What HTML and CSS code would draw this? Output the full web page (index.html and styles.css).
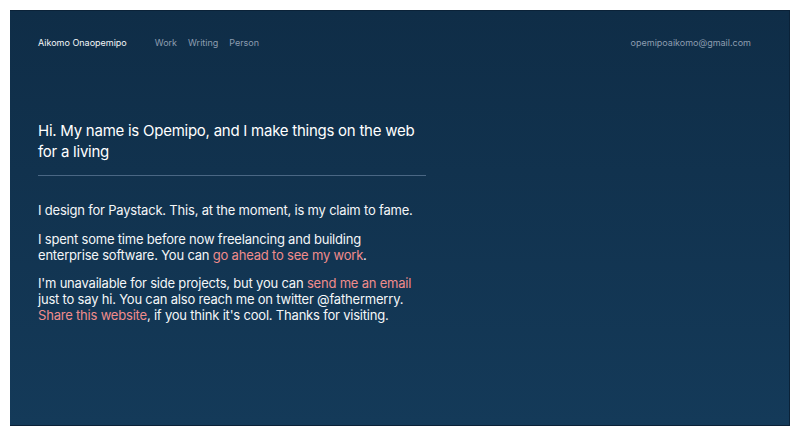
FILE: index.html
```html
<!DOCTYPE html>
<html lang="en">
<head>
  <meta charset="UTF-8" />
  <meta name="viewport" content="width=device-width, initial-scale=1" />
  <title>Aikomo Onaopemipo</title>
  <link rel="stylesheet" href="styles.css">
</head>
<body>
  <div class="frame">
    <!-- Top bar -->
    <header class="topbar">
      <div class="left">
        <a class="brand" href="/">Aikomo Onaopemipo</a>
        <nav>
          <a href="/work">Work</a>
          <a href="/writing">Writing</a>
          <a href="/person">Person</a>
        </nav>
      </div>
      <a class="email" href="mailto:opemipoaikomo@gmail.com">opemipoaikomo@gmail.com</a>
    </header>

    <!-- Intro -->
    <main class="intro">
      <h1>Hi. My name is Opemipo, and I make things on the web for a living</h1>
      <hr>
      <p>I design for Paystack. This, at the moment, is my claim to fame.</p>
      <p>I spent some time before now freelancing and building enterprise software. You can <a href="/work">go ahead to see my work</a>.</p>
      <p>I'm unavailable for side projects, but you can <a href="mailto:opemipoaikomo@gmail.com">send me an email</a> just to say hi. You can also reach me on twitter @fathermerry. <a href="#">Share this website</a>, if you think it's cool. Thanks for visiting.</p>
    </main>
  </div>
</body>
</html>
```

FILE: styles.css
```css
/* Reset */
* {
  margin: 0;
  padding: 0;
  box-sizing: border-box;
}
html, body {
  background-color: #fff;
}
body {
  padding: 10px 10px 12px;
  font-family: "Inter", "Helvetica Neue", Arial, sans-serif;
  color: #f4f6f8;
  overflow: hidden;
}
a {
  text-decoration: none;
}

/* Dark panel */
.frame {
  height: 416px;
  background: linear-gradient(#0f2d47, #143a59);
  border-top: 1px solid #0b2238;
  border-bottom: 1px solid #0b2238;
  border-right: 1px solid #0b2238;
  padding: 0 38px 0 28px;
}

/* Top bar */
.topbar {
  display: flex;
  justify-content: space-between;
  align-items: center;
  height: 63px;
  font-size: 9px;
}
.topbar .left {
  display: flex;
  align-items: center;
}
.brand {
  color: #f4f6f8;
  margin-right: 28px;
}
.topbar nav {
  display: flex;
  gap: 11px;
}
.topbar nav a,
.email {
  color: #8d9db0;
}

/* Intro */
.intro {
  width: 388px;
  padding-top: 46px;
}
.intro h1 {
  font-size: 15px;
  font-weight: 400;
  letter-spacing: -0.25px;
  line-height: 21px;
  color: #fff;
}
.intro hr {
  border: none;
  border-top: 1px solid #4a6784;
  margin: 13px 0 27px;
}
.intro p {
  max-width: 378px;
  font-size: 13px;
  letter-spacing: -0.2px;
  line-height: 15.8px;
  margin-bottom: 13px;
}
.intro p a {
  color: #f08c8c;
}
```
